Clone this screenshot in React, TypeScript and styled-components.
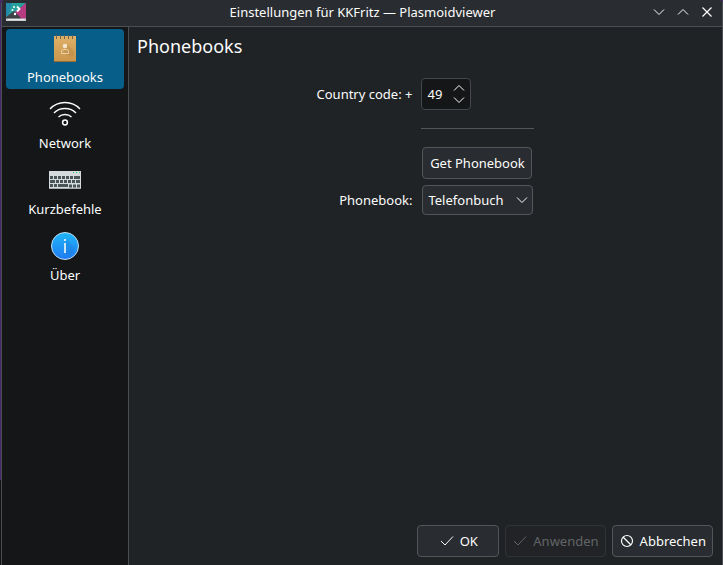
import React, { useState } from "react";
import styled, { createGlobalStyle } from "styled-components";

const color = {
  frame: "#4b4f53",
  titlebar: "#292c30",
  view: "#141618",
  window: "#202326",
  text: "#fcfcfc",
  selected: "#075e89",
  control: "#292c30",
  outline: "#535659",
};

const GlobalStyle = createGlobalStyle`
  * { box-sizing: border-box; }
  html, body, #root { height: 100%; margin: 0; }
  body {
    background: #141618;
    color: ${color.text};
    font: 13px/20px "Noto Sans", sans-serif;
  }
  button, input, select { font: inherit; color: inherit; margin: 0; }
`;

const Desktop = styled.div`
  min-height: 100%;
  display: flex;
  padding-left: 1px;
  background: linear-gradient(#45286a 0 85%, #101214 85%);
`;

const Window = styled.div`
  flex: 1;
  min-width: 0;
  display: flex;
  flex-direction: column;
  border: solid ${color.frame};
  border-width: 0 1px;
  border-radius: 4px 4px 0 0;
  overflow: hidden;
  background: ${color.window};
`;

const TitleBar = styled.header`
  display: grid;
  grid-template-columns: 72px 1fr 72px;
  align-items: center;
  height: 27px;
  padding: 0 3px 2px 4px;
  background: ${color.titlebar};
  border-bottom: 1px solid ${color.frame};
`;

const WindowTitle = styled.h1`
  margin: 0;
  font-size: 13px;
  font-weight: 400;
  text-align: center;
  white-space: nowrap;
`;

const WindowButtons = styled.div`
  display: flex;
  align-items: center;
`;

const WindowButton = styled.button`
  display: flex;
  justify-content: center;
  width: 24px;
  padding: 4px 0;
  border: 0;
  background: none;
`;

const Body = styled.div`
  flex: 1;
  display: flex;
`;

const Sidebar = styled.nav`
  flex: none;
  width: 127px;
  display: flex;
  flex-direction: column;
  gap: 6px;
  padding: 2px 4px;
  background: ${color.view};
  border-right: 1px solid ${color.frame};
`;

const Category = styled.button<{ $active: boolean }>`
  display: flex;
  flex-direction: column;
  align-items: center;
  height: 60px;
  padding: 4px 0 0;
  border: 0;
  border-radius: 4px;
  background: ${(p) => (p.$active ? color.selected : "transparent")};
  svg { flex: none; margin-bottom: 2px; }
`;

const Page = styled.main`
  flex: 1;
  min-width: 0;
  display: flex;
  flex-direction: column;
`;

const PageTitle = styled.h2`
  margin: 0;
  padding: 7px 8px 0;
  font-size: 18px;
  line-height: 25px;
  font-weight: 400;
`;

const Form = styled.form`
  flex: 1;
  display: grid;
  grid-template-columns: auto 113px;
  column-gap: 9px;
  row-gap: 6px;
  justify-content: center;
  align-content: start;
  align-items: center;
  padding-top: 19px;
`;

const Label = styled.label`
  text-align: right;
`;

const Separator = styled.hr`
  grid-column: 2;
  width: 100%;
  margin: 12px 0;
  border: 0;
  border-top: 1px solid ${color.outline};
`;

const SpinBox = styled.div`
  display: flex;
  align-items: center;
  width: 50px;
  height: 32px;
  padding: 0 5px;
  border: 1px solid #43464a;
  border-radius: 4px;
  background: ${color.view};
`;

const SpinInput = styled.input`
  flex: 1;
  min-width: 0;
  padding: 0;
  border: 0;
  outline: 0;
  background: none;
  appearance: textfield;
  &::-webkit-inner-spin-button { appearance: none; }
`;

const SpinButtons = styled.div`
  display: flex;
  flex-direction: column;
`;

const SpinButton = styled.button`
  display: flex;
  justify-content: center;
  padding: 2px 0;
  border: 0;
  background: none;
`;

const Button = styled.button`
  display: flex;
  align-items: center;
  justify-content: center;
  gap: 5px;
  height: 32px;
  padding: 0 6px;
  border: 1px solid ${color.outline};
  border-radius: 4px;
  background: ${color.control};
  white-space: nowrap;
  &:disabled {
    color: #626568;
    border-color: #303336;
    background: #212326;
  }
`;

const FieldButton = styled(Button)`
  grid-column: 2;
  margin: 0 2px 0 1px;
`;

const ComboBox = styled.div`
  display: grid;
  align-items: center;
  margin: 0 1px;
  > * { grid-area: 1 / 1; }
  svg { justify-self: end; margin-right: 5px; pointer-events: none; }
`;

const Select = styled.select`
  width: 100%;
  height: 30px;
  padding: 0 24px 0 5px;
  appearance: none;
  border: 1px solid ${color.outline};
  border-radius: 4px;
  background: ${color.control};
`;

const Footer = styled.footer`
  display: flex;
  justify-content: flex-end;
  gap: 6px;
  padding: 8px 9px;
`;

const FooterButton = styled(Button)`
  min-width: 82px;
`;

const chevrons = { down: "M1 1.5 6 6.5 11 1.5", up: "M1 6.5 6 1.5 11 6.5" };

const Chevron = ({ dir }: { dir: "up" | "down" }) => (
  <svg width="12" height="8" viewBox="0 0 12 8" fill="none" stroke="#fcfcfc">
    <path d={chevrons[dir]} />
  </svg>
);

const AppIcon = () => (
  <svg width="20" height="18" viewBox="0 0 20 18">
    <path d="M0 0h20L9 11 0 16z" fill="#26a19b" />
    <path d="M0 0h6L2 13H0z" fill="#238aaa" />
    <path d="M20 0v16H14L9 9z" fill="#b63b80" />
    <path d="M0 14 8 8l7 7v1H0z" fill="#3d4148" />
    <path d="M0 15.500h20v2.500H0z" fill="#c9cdd0" />
    <path d="M2 16.500h16" stroke="#e8eaec" />
    <path d="m11 3.500 2.500 2.500L11 8.500" fill="none" stroke="#fff" strokeWidth="1.800" />
    <circle cx="8" cy="4" r="1" fill="#fff" />
    <circle cx="6.500" cy="7" r="1" fill="#fff" />
    <circle cx="9" cy="11" r="1.200" fill="#fff" />
  </svg>
);

const BookIcon = () => (
  <svg width="32" height="32" viewBox="0 0 32 32">
    <defs>
      <linearGradient id="book" x2="0" y2="1">
        <stop stopColor="#dfb069" />
        <stop offset="1" stopColor="#c9964b" />
      </linearGradient>
    </defs>
    <path d="M5 3h22v26H5z" fill="url(#book)" />
    <path d="M5 28.500h22" stroke="#9a6b35" />
    <path d="m18 11 7 7v5l-3 1-7-4z" fill="#a87534" opacity=".25" />
    <path d="M7.500 2v4M11.500 2v4M15.500 2v4M19.500 2v4M23.500 2v4" stroke="#6d6350" />
    <circle cx="16" cy="13" r="2.300" fill="#f3e5cb" />
    <path d="M12.500 20.500v-2q0-2 2-2h3q2 0 2 2v2z" fill="none" stroke="#e9d2a9" />
  </svg>
);

const WifiIcon = () => (
  <svg width="32" height="32" viewBox="0 0 32 32" fill="none" stroke="#fcfcfc" strokeWidth="1.300">
    <path d="M1 10Q7 3.500 16 3.500T31 10M5 14Q9 9.500 16 9.500T27 14M9.500 18Q12 15.500 16 15.500T22.500 18" />
    <circle cx="16" cy="23.500" r="2.400" strokeWidth="1.500" />
  </svg>
);

const KeyboardIcon = () => (
  <svg width="32" height="32" viewBox="0 0 32 32">
    <path d="M0 6h32v18H0z" fill="#d5dadd" />
    <path d="M0 23.500h32" stroke="#a9afb3" />
    <path d="M24 7.500h1M27 7.500h1M30 7.500h1" stroke="#2ecc71" />
    <g stroke="#4a5557" strokeWidth="3">
      <path d="M1 12.500h3M5 12.500h3M9 12.500h3M13 12.500h3M17 12.500h3M21 12.500h3M25 12.500h6" />
      <path d="M1 16.500h5M7 16.500h3M11 16.500h3M15 16.500h3M19 16.500h3M23 16.500h3M27 16.500h4" />
      <path d="M1 20.500h3M5 20.500h3M9 20.500h10M20 21h3M24 21h3M28 21h3" />
    </g>
  </svg>
);

const InfoIcon = () => (
  <svg width="32" height="32" viewBox="0 0 32 32">
    <defs>
      <linearGradient id="info" x2="0" y2="1">
        <stop stopColor="#20b7f8" />
        <stop offset="1" stopColor="#1f7bf2" />
      </linearGradient>
    </defs>
    <circle cx="16" cy="15" r="13.500" fill="url(#info)" stroke="#c4dcec" />
    <path d="m17 8 9 9q-2 6-7 8l-3-3z" fill="#146bc4" opacity=".2" />
    <path d="M16 8v2M16 12v10" stroke="#dff1ff" strokeWidth="1.800" />
  </svg>
);

const CheckIcon = () => (
  <svg width="16" height="16" viewBox="0 0 16 16" fill="none" stroke="currentColor">
    <path d="m2 8 4 4 8-8.500" />
  </svg>
);

const CancelIcon = () => (
  <svg width="16" height="16" viewBox="0 0 16 16" fill="none" stroke="currentColor" strokeWidth="1.200">
    <circle cx="8" cy="8" r="5.500" />
    <path d="m4 4 8 8" />
  </svg>
);

const categories = [
  { name: "Phonebooks", Icon: BookIcon },
  { name: "Network", Icon: WifiIcon },
  { name: "Kurzbefehle", Icon: KeyboardIcon },
  { name: "Über", Icon: InfoIcon },
];

export default function App() {
  const [active, setActive] = useState("Phonebooks");
  const [code, setCode] = useState(49);

  return (
    <>
      <GlobalStyle />
      <Desktop>
        <Window>
          <TitleBar>
            <AppIcon />
            <WindowTitle>Einstellungen für KKFritz — Plasmoidviewer</WindowTitle>
            <WindowButtons>
              <WindowButton aria-label="Minimieren"><Chevron dir="down" /></WindowButton>
              <WindowButton aria-label="Maximieren"><Chevron dir="up" /></WindowButton>
              <WindowButton aria-label="Schließen">
                <svg width="10" height="10" viewBox="0 0 10 10" stroke="#fcfcfc" strokeWidth="1.2">
                  <path d="m.5.5 9 9m0-9-9 9" />
                </svg>
              </WindowButton>
            </WindowButtons>
          </TitleBar>
          <Body>
            <Sidebar>
              {categories.map(({ name, Icon }) => (
                <Category key={name} $active={name === active} onClick={() => setActive(name)}>
                  <Icon />
                  {name}
                </Category>
              ))}
            </Sidebar>
            <Page>
              <PageTitle>Phonebooks</PageTitle>
              <Form onSubmit={(e) => e.preventDefault()}>
                <Label htmlFor="code">Country code: +</Label>
                <SpinBox>
                  <SpinInput id="code" type="number" value={code} onChange={(e) => setCode(Number(e.target.value))} />
                  <SpinButtons>
                    <SpinButton type="button" aria-label="Increase" onClick={() => setCode(code + 1)}>
                      <Chevron dir="up" />
                    </SpinButton>
                    <SpinButton type="button" aria-label="Decrease" onClick={() => setCode(code - 1)}>
                      <Chevron dir="down" />
                    </SpinButton>
                  </SpinButtons>
                </SpinBox>
                <Separator />
                <FieldButton type="button">Get Phonebook</FieldButton>
                <Label htmlFor="book-select">Phonebook:</Label>
                <ComboBox>
                  <Select id="book-select">
                    <option>Telefonbuch</option>
                  </Select>
                  <Chevron dir="down" />
                </ComboBox>
              </Form>
              <Footer>
                <FooterButton><CheckIcon />OK</FooterButton>
                <FooterButton disabled><CheckIcon />Anwenden</FooterButton>
                <FooterButton><CancelIcon />Abbrechen</FooterButton>
              </Footer>
            </Page>
          </Body>
        </Window>
      </Desktop>
    </>
  );
}
